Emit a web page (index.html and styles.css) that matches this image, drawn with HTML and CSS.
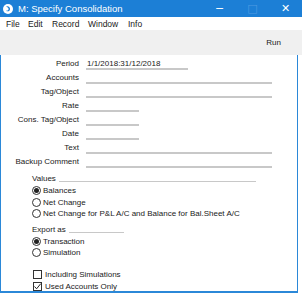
FILE: index.html
```html
<!DOCTYPE html>
<html lang="en">
<head>
    <meta charset="UTF-8">
    <title>M: Specify Consolidation</title>
    <link rel="stylesheet" href="styles.css">
</head>
<body>
    <div class="window">
        <div class="titlebar">
            <svg class="app-icon" width="10" height="10" viewBox="0 0 10 10">
                <circle cx="5" cy="5" r="5" fill="#fff"/>
                <path d="M3 2.5 C5 1.5 7.5 3 7 5.5 C6.6 7.5 4 8 3 6.5 C4.5 7 6 6 5.5 4.5 C5 3.2 3.8 3 3 2.5 Z" fill="#1c7fd6"/>
            </svg>
            <span class="title">M: Specify Consolidation</span>
            <span class="spacer"></span>
            <span class="ctl ctl-min">&#x2500;</span>
            <span class="ctl ctl-max">&#x25A1;</span>
            <span class="ctl ctl-close">&#x2715;</span>
        </div>

        <div class="menubar">
            <span>File</span>
            <span>Edit</span>
            <span>Record</span>
            <span>Window</span>
            <span>Info</span>
        </div>

        <div class="toolbar">
            <span class="run">Run</span>
        </div>

        <div class="form">
            <div class="fields">
                <label>Period</label><div class="field field-mid">1/1/2018:31/12/2018</div>
                <label>Accounts</label><div class="field field-long"></div>
                <label>Tag/Object</label><div class="field field-long"></div>
                <label>Rate</label><div class="field field-short"></div>
                <label>Cons. Tag/Object</label><div class="field field-short"></div>
                <label>Date</label><div class="field field-short"></div>
                <label>Text</label><div class="field field-long"></div>
                <label>Backup Comment</label><div class="field field-long"></div>
            </div>

            <div class="group group-values">
                <div class="group-head"><span>Values</span><span class="rule"></span></div>
                <div class="opt"><span class="radio checked"></span>Balances</div>
                <div class="opt"><span class="radio"></span>Net Change</div>
                <div class="opt"><span class="radio"></span>Net Change for P&amp;L A/C and Balance for Bal.Sheet A/C</div>
            </div>

            <div class="group group-export">
                <div class="group-head"><span>Export as</span><span class="rule"></span></div>
                <div class="opt"><span class="radio checked"></span>Transaction</div>
                <div class="opt"><span class="radio"></span>Simulation</div>
            </div>

            <div class="checks">
                <div class="chk"><span class="box"></span>Including Simulations</div>
                <div class="chk"><span class="box checked">
                    <svg width="9" height="9" viewBox="0 0 9 9"><path d="M1.5 4.5 L3.6 6.8 L7.8 1.6" fill="none" stroke="#222" stroke-width="1"/></svg>
                </span>Used Accounts Only</div>
            </div>
        </div>
    </div>
</body>
</html>
```

FILE: styles.css
```css
* {
    margin: 0;
    padding: 0;
    box-sizing: border-box;
}

body {
    width: 302px;
    height: 294px;
    background: #fff;
    font-family: 'Liberation Sans', Arial, sans-serif;
    font-size: 8px;
    color: #1a1a1a;
    overflow: hidden;
}

.window {
    width: 302px;
}

.titlebar {
    height: 17px;
    background: #1c7fd6;
    color: #fff;
    display: flex;
    align-items: center;
    padding-left: 3px;
}

.app-icon {
    margin-right: 5px;
    flex-shrink: 0;
}

.title {
    font-size: 9.5px;
    white-space: nowrap;
}

.spacer {
    flex: 1;
}

.ctl {
    width: 33px;
    height: 17px;
    flex-shrink: 0;
    line-height: 17px;
    text-align: center;
    font-family: 'DejaVu Sans', sans-serif;
    color: #fff;
}

.ctl-min {
    font-size: 11px;
}

.ctl-max {
    font-size: 11px;
    color: #4f9be2;
}

.ctl-close {
    font-size: 11px;
}

.menubar {
    height: 13px;
    display: flex;
    align-items: center;
    padding-left: 6px;
    font-size: 8.5px;
}

.menubar span:nth-child(1) { width: 22px; }
.menubar span:nth-child(2) { width: 24px; }
.menubar span:nth-child(3) { width: 36px; }
.menubar span:nth-child(4) { width: 40px; }

.toolbar {
    height: 25px;
    background: #f0f0f0;
    display: flex;
    align-items: center;
    justify-content: flex-end;
    padding-right: 21px;
}

.form {
    width: 298px;
    height: 238px;
    border: 1px solid #2b88d8;
    border-top: none;
    border-bottom-width: 2px;
    padding-top: 2px;
}

.fields {
    display: grid;
    grid-template-columns: 78px 1fr;
    grid-auto-rows: 14px;
    column-gap: 7px;
}

.fields label {
    text-align: right;
    line-height: 14px;
}

.field {
    height: 12px;
    border-bottom: 2px solid #c8c8c8;
    line-height: 12px;
    padding-left: 1px;
    margin-top: 1px;
}

.field-long {
    width: 186px;
}

.field-mid {
    width: 102px;
}

.field-short {
    width: 53px;
}

.group {
    padding-left: 31px;
}

.group-values {
    margin-top: 4px;
}

.group-export {
    margin-top: 4px;
}

.group-head {
    display: flex;
    align-items: flex-end;
    height: 12px;
    line-height: 12px;
}

.group-values .group-head {
    width: 224px;
}

.group-export .group-head {
    width: 92px;
}

.rule {
    flex: 1;
    border-bottom: 1px solid #c8c8c8;
    margin-left: 3px;
    margin-bottom: 3px;
}

.opt {
    display: flex;
    align-items: center;
    height: 11.5px;
}

.radio {
    width: 9px;
    height: 9px;
    border: 1px solid #333;
    border-radius: 50%;
    margin-right: 2px;
    display: flex;
    align-items: center;
    justify-content: center;
}

.radio.checked::after {
    content: "";
    width: 5px;
    height: 5px;
    border-radius: 50%;
    background: #222;
}

.checks {
    margin-top: 10px;
    padding-left: 32px;
}

.chk {
    display: flex;
    align-items: center;
    height: 12px;
}

.box {
    width: 9px;
    height: 9px;
    border: 1px solid #333;
    margin-right: 3px;
    display: flex;
}

.box svg {
    margin: -1px;
}
```
